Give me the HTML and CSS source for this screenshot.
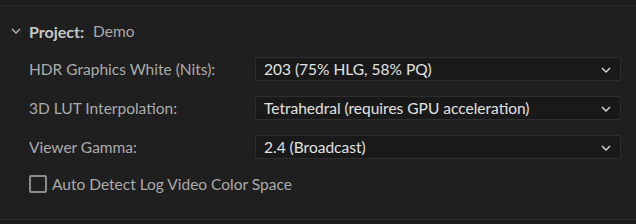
FILE: index.html
```html
<!DOCTYPE html>
<html>
<head>
<meta charset="utf-8">
<link rel="stylesheet" href="styles.css">
</head>
<body>
<div class="panel">
  <div class="topline"></div>
  <div class="header">
    <svg class="twisty" width="10" height="6" viewBox="0 0 10 6"><path d="M1 1 L5 5 L9 1" fill="none" stroke="#b4b4b4" stroke-width="1.4"/></svg>
    <span class="title">Project:</span>
    <span class="name">Demo</span>
  </div>
  <div class="rows">
    <div class="row">
      <span class="label">HDR Graphics White (Nits):</span>
      <div class="select"><span>203 (75% HLG, 58% PQ)</span><svg class="chev" width="10" height="6" viewBox="0 0 10 6"><path d="M1 1 L5 5 L9 1" fill="none" stroke="#d8d8d8" stroke-width="1.4"/></svg></div>
    </div>
    <div class="row">
      <span class="label">3D LUT Interpolation:</span>
      <div class="select"><span>Tetrahedral (requires GPU acceleration)</span><svg class="chev" width="10" height="6" viewBox="0 0 10 6"><path d="M1 1 L5 5 L9 1" fill="none" stroke="#d8d8d8" stroke-width="1.4"/></svg></div>
    </div>
    <div class="row">
      <span class="label">Viewer Gamma:</span>
      <div class="select"><span>2.4 (Broadcast)</span><svg class="chev" width="10" height="6" viewBox="0 0 10 6"><path d="M1 1 L5 5 L9 1" fill="none" stroke="#d8d8d8" stroke-width="1.4"/></svg></div>
    </div>
  </div>
  <label class="check"><span class="box"></span><span class="checktext">Auto Detect Log Video Color Space</span></label>
  <div class="bottomline"></div>
</div>
</body>
</html>
```
FILE: styles.css
```css
html, body {
  margin: 0;
  padding: 0;
  background: #1f1f1f;
}
.panel {
  width: 636px;
  height: 224px;
  display: flex;
  flex-direction: column;
  font-family: Lato, "Liberation Sans", sans-serif;
  font-size: 15.5px;
  color: #ababab;
  overflow: hidden;
}
.topline {
  height: 5px;
  border-bottom: 1px solid #2c2c2c;
  background: #1c1c1c;
}
.header {
  margin-top: 15px;
  height: 20px;
  display: flex;
  align-items: center;
  padding-left: 11px;
}
.twisty {
  margin-right: 8px;
}
.title {
  font-weight: bold;
  font-size: 16px;
  color: #c6c6c6;
  margin-right: 9px;
}
.name {
  color: #ababab;
}
.rows {
  margin-top: 16px;
  display: flex;
  flex-direction: column;
  gap: 15px;
}
.row {
  display: grid;
  grid-template-columns: 226px 366px;
  padding-left: 29px;
  height: 24px;
  align-items: center;
}
.select {
  box-sizing: border-box;
  height: 24px;
  background: #191919;
  border: 1px solid #2e2e2e;
  border-radius: 2px;
  display: flex;
  align-items: center;
  justify-content: space-between;
  padding: 0 9px 0 8px;
  color: #e2e2e2;
}
.chev {
  margin-top: 1px;
}
.check {
  margin-top: 16px;
  padding-left: 29px;
  height: 18px;
  display: flex;
  align-items: center;
}
.box {
  box-sizing: border-box;
  width: 18px;
  height: 18px;
  border: 2px solid #8a8a8a;
  border-radius: 2px;
  margin-right: 5px;
}
.checktext {
  color: #ababab;
}
.bottomline {
  margin-top: 26px;
  height: 0;
  border-top: 1px solid #2c2c2c;
  flex: 1;
  background: #1c1c1c;
}
```
